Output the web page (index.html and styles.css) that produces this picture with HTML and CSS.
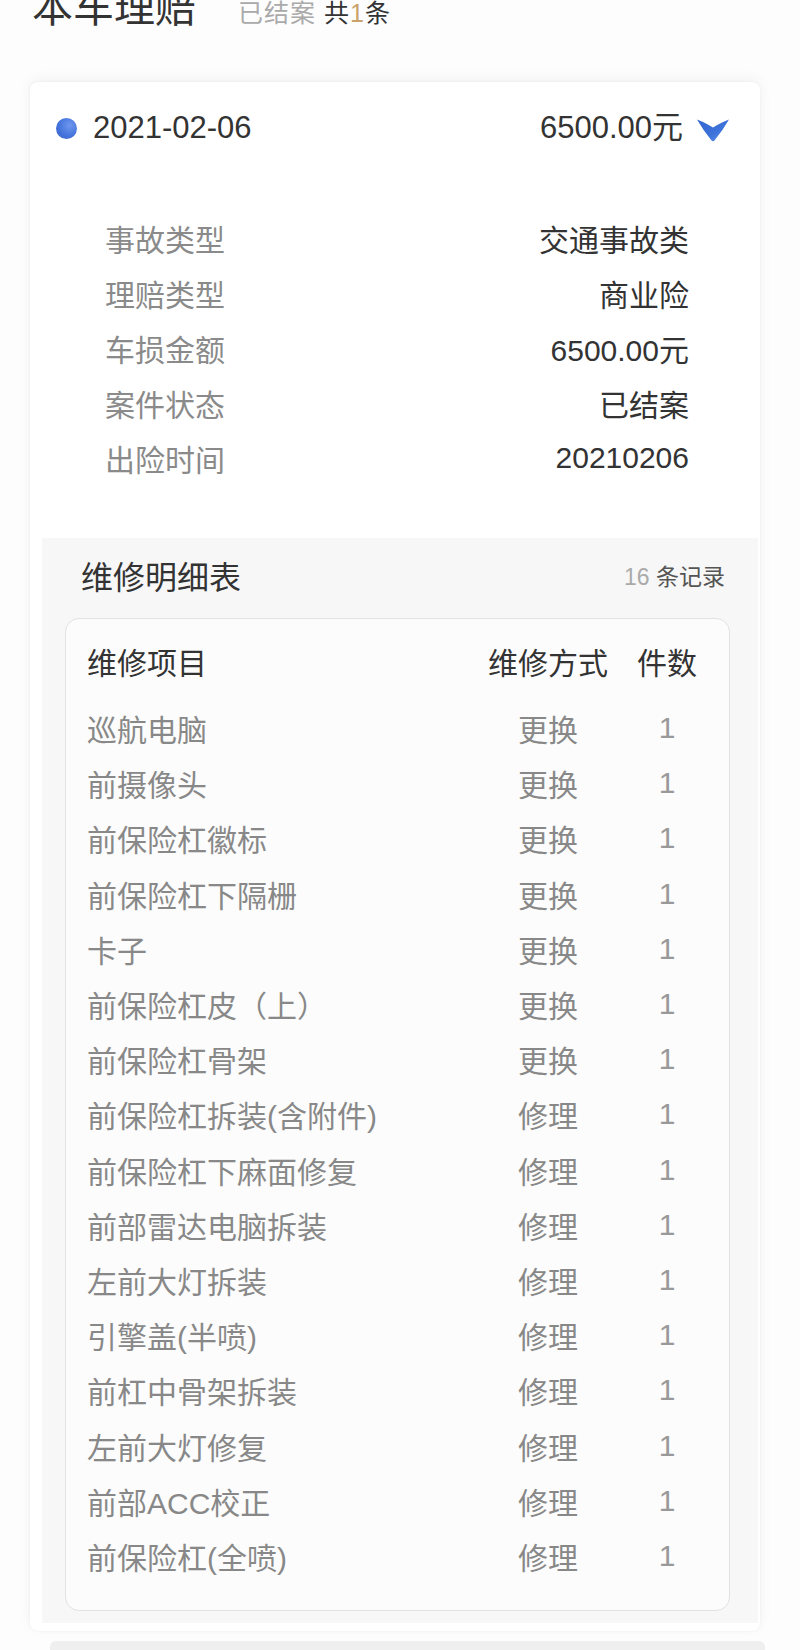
FILE: index.html
```html
<!DOCTYPE html>
<html lang="zh-CN">
<head>
<meta charset="utf-8">
<title>本车理赔</title>
<link rel="stylesheet" href="styles.css">
</head>
<body>
<div class="page">
  <div class="head">
    <span class="head-title">本车理赔</span>
    <span class="head-sub"><span class="muted">已结案</span> 共<span class="gold">1</span>条</span>
  </div>

  <div class="card">
    <div class="card-top">
      <span class="dot"></span>
      <span class="date">2021-02-06</span>
      <span class="amount">6500.00元</span>
      <svg class="chev" width="34" height="24" viewBox="0 0 34 24">
        <defs>
          <linearGradient id="cg" x1="0" y1="0" x2="1" y2="1">
            <stop offset="0" stop-color="#3465cf"/>
            <stop offset="0.6" stop-color="#3d73da"/>
            <stop offset="1" stop-color="#6f9cec"/>
          </linearGradient>
        </defs>
        <path d="M1 1.5 Q8 4 17 9.5 Q26 4 33 1.5 Q27 12 18.5 22.5 Q17 24 15.5 22.5 Q7 12 1 1.5 Z" fill="url(#cg)"/>
      </svg>
    </div>

    <div class="info">
      <div class="info-row"><span class="label">事故类型</span><span class="value">交通事故类</span></div>
      <div class="info-row"><span class="label">理赔类型</span><span class="value">商业险</span></div>
      <div class="info-row"><span class="label">车损金额</span><span class="value">6500.00元</span></div>
      <div class="info-row"><span class="label">案件状态</span><span class="value">已结案</span></div>
      <div class="info-row"><span class="label">出险时间</span><span class="value">20210206</span></div>
    </div>

    <div class="repair">
      <div class="repair-head">
        <span class="repair-title">维修明细表</span>
        <span class="repair-count"><span class="num">16</span> 条记录</span>
      </div>
      <div class="table">
        <div class="trow thead"><span>维修项目</span><span class="c2">维修方式</span><span class="c3">件数</span></div>
        <div class="tbody">
          <div class="trow"><span>巡航电脑</span><span class="c2">更换</span><span class="c3">1</span></div>
          <div class="trow"><span>前摄像头</span><span class="c2">更换</span><span class="c3">1</span></div>
          <div class="trow"><span>前保险杠徽标</span><span class="c2">更换</span><span class="c3">1</span></div>
          <div class="trow"><span>前保险杠下隔栅</span><span class="c2">更换</span><span class="c3">1</span></div>
          <div class="trow"><span>卡子</span><span class="c2">更换</span><span class="c3">1</span></div>
          <div class="trow"><span>前保险杠皮（上）</span><span class="c2">更换</span><span class="c3">1</span></div>
          <div class="trow"><span>前保险杠骨架</span><span class="c2">更换</span><span class="c3">1</span></div>
          <div class="trow"><span>前保险杠拆装(含附件)</span><span class="c2">修理</span><span class="c3">1</span></div>
          <div class="trow"><span>前保险杠下麻面修复</span><span class="c2">修理</span><span class="c3">1</span></div>
          <div class="trow"><span>前部雷达电脑拆装</span><span class="c2">修理</span><span class="c3">1</span></div>
          <div class="trow"><span>左前大灯拆装</span><span class="c2">修理</span><span class="c3">1</span></div>
          <div class="trow"><span>引擎盖(半喷)</span><span class="c2">修理</span><span class="c3">1</span></div>
          <div class="trow"><span>前杠中骨架拆装</span><span class="c2">修理</span><span class="c3">1</span></div>
          <div class="trow"><span>左前大灯修复</span><span class="c2">修理</span><span class="c3">1</span></div>
          <div class="trow"><span>前部ACC校正</span><span class="c2">修理</span><span class="c3">1</span></div>
          <div class="trow"><span>前保险杠(全喷)</span><span class="c2">修理</span><span class="c3">1</span></div>
        </div>
      </div>
    </div>
  </div>

  <div class="next-card"></div>
</div>
</body>
</html>
```

FILE: styles.css
```css
html, body {
  margin: 0;
  padding: 0;
  background: #fdfdfd;
}

body {
  font-family: "Liberation Sans", "Noto Sans CJK SC", sans-serif;
  color: #333;
  overflow: hidden;
}

.page {
  width: 800px;
  height: 1650px;
  overflow: hidden;
}

.head {
  display: flex;
  align-items: baseline;
  height: 41px;
  margin-top: -12px;
  padding-left: 32px;
  line-height: 41px;
}

.head-title {
  font-size: 41px;
  color: #333;
  font-weight: 400;
}

.head-sub {
  margin-left: 42px;
  font-size: 25px;
  color: #333;
  letter-spacing: 1px;
}

.muted { color: #aaa; }
.gold { color: #c9a36a; }

.card {
  margin: 53px 40px 0 30px;
  background: #fff;
  border-radius: 8px;
  box-shadow: 0 -3px 14px rgba(0, 0, 0, 0.05), 0 0 3px rgba(0, 0, 0, 0.05);
  padding: 28px 0 8px;
}

.card-top {
  display: flex;
  align-items: baseline;
  height: 36px;
  line-height: 36px;
  padding: 0 30px 0 26px;
}

.dot {
  width: 21px;
  height: 21px;
  border-radius: 50%;
  background: radial-gradient(circle at 65% 35%, #6f97ee 0%, #4474dc 55%, #3a5fc4 100%);
  flex: none;
  align-self: center;
}

.date {
  margin-left: 16px;
  font-size: 31px;
  color: #333;
}

.amount {
  margin-left: auto;
  font-size: 31px;
  color: #333;
}

.chev {
  margin-left: 13px;
  flex: none;
  align-self: center;
  margin-top: 3px;
}

.info {
  margin-top: 64px;
  padding: 0 71px 0 75px;
}

.info-row {
  display: flex;
  justify-content: space-between;
  align-items: center;
  height: 55px;
  font-size: 30px;
}

.label { color: #8a8a8a; }
.value { color: #333; }

.repair {
  margin: 53px 2px 0 12px;
  background: #f7f7f7;
  padding: 20px 28px 12px 23px;
}

.repair-head {
  display: flex;
  justify-content: space-between;
  align-items: center;
  height: 34px;
  padding: 0 5px 0 16px;
  margin-bottom: 26px;
}

.repair-title {
  font-size: 32px;
  color: #333;
}

.repair-count {
  font-size: 23px;
  color: #555;
}

.repair-count .num { color: #aaa; }

.table {
  border: 1px solid #e2e2e2;
  border-radius: 14px;
  background: #fcfcfc;
  padding: 14px 32px 26px 21px;
}

.trow {
  display: grid;
  grid-template-columns: 1fr 122px 60px;
  column-gap: 28px;
  align-items: center;
  height: 55.2px;
  font-size: 30px;
  color: #888;
  white-space: nowrap;
}

.thead {
  height: 55px;
  color: #333;
}

.tbody {
  margin-top: 12.5px;
}

.c2, .c3 {
  text-align: center;
}

.c3 { color: #999; }
.thead .c3 { color: #333; }

.next-card {
  margin: 10px 35px 0 50px;
  height: 40px;
  background: #efefef;
  border-radius: 6px;
}
```
